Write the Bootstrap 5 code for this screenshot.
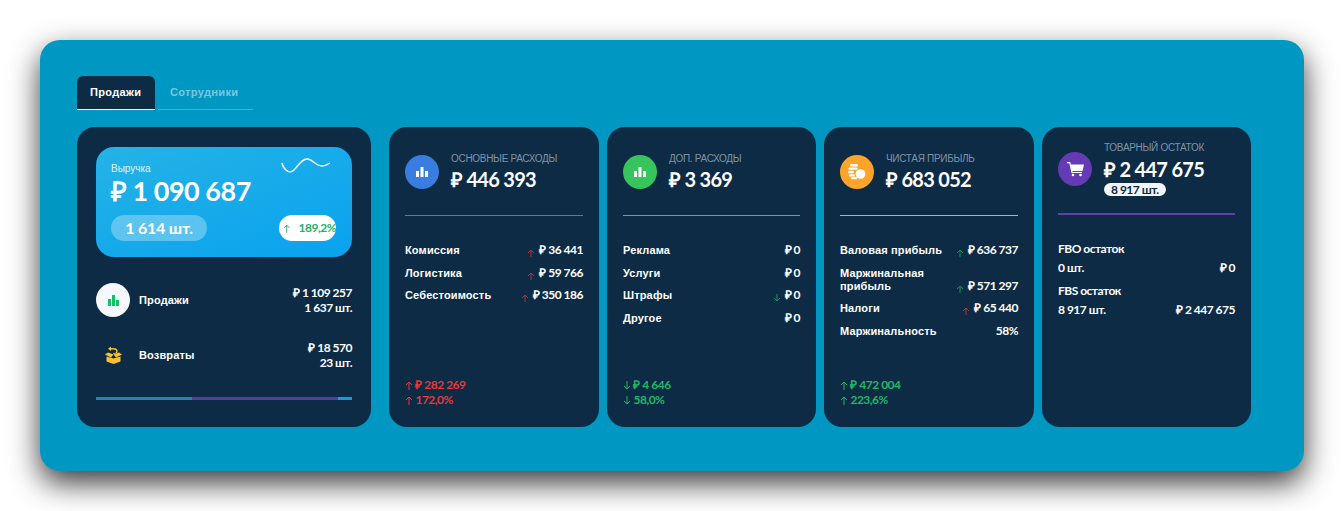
<!DOCTYPE html>
<html lang="ru">
<head>
  <meta charset="UTF-8" />
  <meta name="viewport" content="width=device-width, initial-scale=1.0" />
  <link href="https://cdn.jsdelivr.net/npm/bootstrap@5.3.3/dist/css/bootstrap.min.css" rel="stylesheet" />
  <title>Продажи</title>
  <style>
    html, body { height: 511px; overflow: hidden; }
    body { background: #fff; font-family: Lato, "Liberation Sans", sans-serif; color: #fff; padding: 40px; }
    .panel { width: 1264px; height: 431px; background: #0098c3; border-radius: 20px; box-shadow: 0 12px 30px rgba(0,0,0,.78); padding: 36px 53px 0 37px; }
    .tabs { height: 34px; margin-bottom: 17px; }
    .tab-item { font-family: "Liberation Sans", sans-serif; font-size: 11px; font-weight: 700; letter-spacing: .35px; line-height: 32px; height: 34px; border-bottom: 1px solid rgba(255,255,255,.25); color: #7cc6df; }
    .tab-item.on { width: 78px; padding-left: 13px; background: #0d2b45; color: #fff; border-radius: 6px 6px 0 0; border-bottom-color: #fff; margin-right: 3px; }
    .tab-item.off { width: 95px; padding-left: 12px; }
    .tile { background: #0d2b45; border-radius: 18px; height: 300px; font-size: 12px; letter-spacing: -.5px; font-weight: 700; }
    .tile-main { width: 294px; padding: 20px 19px; margin-right: 18px; }
    .tile-sub { width: 210px; padding: 28px 16px 0; margin-right: 8px; }
    .tile-narrow { width: 209px; }
    .tile-last { margin-right: 0; }
    .label-font { font-family: "Liberation Sans", sans-serif; font-size: 11px; letter-spacing: .15px; }
    .line .label-font { padding-top: 1px; }
    .hero { height: 110px; border-radius: 18px; background: linear-gradient(160deg, #25b3e6, #09a2ee); padding: 15px 15px 0; position: relative; }
    .hero-cap { font-family: "Liberation Sans", sans-serif; font-size: 10px; font-weight: 400; letter-spacing: 0; line-height: 14px; opacity: .85; }
    .hero-val { font-size: 27px; line-height: 28px; letter-spacing: -.5px; margin-top: 1px; }
    .hero-foot { margin-top: 10px; }
    .pill-qty { width: 96px; height: 26px; line-height: 26px; border-radius: 13px; text-align: center; background: rgba(255,255,255,.3); font-size: 16px; letter-spacing: -.2px; }
    .pill-up { width: 57px; height: 26px; line-height: 26px; border-radius: 13px; background: #fff; color: #21b26b; white-space: nowrap; margin-right: 1px; padding-left: 4px; }
    .pill-arrow { margin-right: 8px; }
    .wave { position: absolute; right: 21px; top: 10px; }
    .flow-row { height: 34px; }
    .flow-first { margin-top: 26px; }
    .flow-next { margin-top: 21px; }
    .flow-ico { width: 34px; height: 34px; border-radius: 50%; margin-right: 9px; }
    .ico-light { background: #f5f8fc; }
    .flow-num { line-height: 15px; text-align: right; }
    .bar-track { height: 3px; margin-top: 25px; }
    .bar-a { width: 96px; background: #1f87b5; }
    .bar-b { width: 146px; background: #5c37ae; }
    .bar-c { width: 14px; background: #0d9fe6; }
    .head-block { height: 34px; }
    .head-ico { width: 34px; height: 34px; border-radius: 50%; margin-right: 12px; flex: none; }
    .head-cap { font-family: "Liberation Sans", sans-serif; font-size: 10px; font-weight: 400; line-height: 12px; color: #7f93a6; text-transform: uppercase; white-space: nowrap; margin-top: -2px; letter-spacing: -.3px; }
    .head-val { font-size: 20px; line-height: 24px; margin-top: 2px; white-space: nowrap; letter-spacing: -.7px; }
    .rule { height: 1px; margin-top: 26px; margin-bottom: 27px; }
    .c-blue { background: #3a7de0; }
    .c-green { background: #38c45c; }
    .c-orange { background: #ffa42b; }
    .c-purple { background: #643ab5; }
    .rows { height: 134px; }
    .line { min-height: 22.5px; line-height: 13px; }
    .line svg { vertical-align: -3px; }
    .line-tall { min-height: 35.5px; }
    .line-name { max-width: 110px; }
    .line-val { white-space: nowrap; }
    .line-low { padding-top: 13px; }
    .foot { line-height: 15px; }
    .foot svg { vertical-align: -1px; }
    .txt-red { color: #e23a3e; }
    .txt-green { color: #1fb866; }
    .qty-pill { display: inline-block; background: #f2f5fa; color: #0d2b45; border-radius: 7px; height: 13px; line-height: 13px; padding: 0 7px; margin-top: 2px; vertical-align: top; }
    .stock-head { height: auto; margin-top: -14px; }
    .stock-ico { margin-top: 11px; }
    .stock-cap { margin-top: 1px; }
    .stock-val { margin-top: 3px; }
    .stock-rule { height: 2px; margin-top: 14px; margin-bottom: 27px; }
    .stock-line { line-height: 13px; margin-bottom: 6px; }
    .stock-gap { margin-bottom: 10px; }
  </style>
</head>
<body>
  <div class="panel">
    <div class="tabs d-flex">
      <div class="tab-item on">Продажи</div>
      <div class="tab-item off">Сотрудники</div>
    </div>

    <div class="d-flex">
      <div class="tile tile-main">
        <div class="hero">
          <svg class="wave" width="50" height="18" viewBox="0 0 50 18" fill="none"><path d="M1 6C3 14 9 17 13 13C17 9 21 1 27 2C32 3 35 9 41 9C44 9 46 8 49 6" stroke="#fff" stroke-width="1.4"/></svg>
          <div class="hero-cap">Выручка</div>
          <div class="hero-val">₽ 1 090 687</div>
          <div class="hero-foot d-flex justify-content-between">
            <div class="pill-qty">1 614 шт.</div>
            <div class="pill-up d-flex align-items-center">
              <svg class="pill-arrow" width="8" height="9" viewBox="0 0 8 9" fill="none" stroke="#21b26b" stroke-width="1"><path d="M4 9V1M1 4l3-3 3 3"/></svg>189,2%
            </div>
          </div>
        </div>

        <div class="flow-row flow-first d-flex align-items-center justify-content-between">
          <div class="d-flex align-items-center">
            <div class="flow-ico ico-light d-flex align-items-center justify-content-center">
              <svg width="11" height="11" viewBox="0 0 11 11" fill="#12c15f"><rect x="0" y="4" width="3" height="7"/><rect x="4" y="0" width="3" height="11"/><rect x="8" y="5" width="3" height="6"/></svg>
            </div>
            <span class="label-font">Продажи</span>
          </div>
          <div class="flow-num">₽ 1 109 257<br>1 637 шт.</div>
        </div>

        <div class="flow-row flow-next d-flex align-items-center justify-content-between">
          <div class="d-flex align-items-center">
            <div class="flow-ico d-flex align-items-center justify-content-center">
              <svg width="17" height="18" viewBox="0 0 17 18"><path d="M1.5 10.5l7 2 7-2v5l-7 2.5-7-2.5z" fill="#fbc02d"/><path d="M0 8.5L3 6.5l5.5 2L6 11.5zM17 8.5L14 6.5l-5.5 2 2.5 3z" fill="#fbc02d"/><path d="M8 8V7.2c2.5 0 3.2-1 3.2-2S10.4 3.4 8.5 3.4H6V5L3 2.7 6 .5V2h2.5c3 0 4.2 1.5 4.2 3.2 0 1.8-1.500 2.800-4.700 2.800z" fill="#fbc02d"/></svg>
            </div>
            <span class="label-font">Возвраты</span>
          </div>
          <div class="flow-num">₽ 18 570<br>23 шт.</div>
        </div>

        <div class="bar-track d-flex">
          <div class="bar-a"></div><div class="bar-b"></div><div class="bar-c"></div>
        </div>
      </div>

      <div class="tile tile-sub">
        <div class="head-block d-flex">
          <div class="head-ico c-blue d-flex align-items-center justify-content-center">
            <svg width="12" height="10" viewBox="0 0 12 10" fill="#fff"><rect x="0" y="4" width="3" height="6"/><rect x="4.5" y="0" width="3" height="10"/><rect x="9" y="4" width="3" height="6"/></svg>
          </div>
          <div>
            <div class="head-cap">Основные расходы</div>
            <div class="head-val">₽ 446 393</div>
          </div>
        </div>
        <div class="rule c-blue"></div>
        <div class="rows">
          <div class="line d-flex justify-content-between"><span class="label-font">Комиссия</span><span class="line-val"><svg class="me-1" width="8" height="8" viewBox="0 0 8 8" fill="none" stroke="#b3313a"><path d="M4 8V1M1 4l3-3 3 3"/></svg>₽ 36 441</span></div>
          <div class="line d-flex justify-content-between"><span class="label-font">Логистика</span><span class="line-val"><svg class="me-1" width="8" height="8" viewBox="0 0 8 8" fill="none" stroke="#b3313a"><path d="M4 8V1M1 4l3-3 3 3"/></svg>₽ 59 766</span></div>
          <div class="line d-flex justify-content-between"><span class="label-font">Себестоимость</span><span class="line-val"><svg class="me-1" width="8" height="8" viewBox="0 0 8 8" fill="none" stroke="#b3313a"><path d="M4 8V1M1 4l3-3 3 3"/></svg>₽ 350 186</span></div>
        </div>
        <div class="foot txt-red">
          <div><svg width="8" height="9" viewBox="0 0 8 9" fill="none" stroke="#e23a3e"><path d="M4 9V1M1 4l3-3 3 3"/></svg> ₽ 282 269</div>
          <div><svg width="8" height="9" viewBox="0 0 8 9" fill="none" stroke="#e23a3e"><path d="M4 9V1M1 4l3-3 3 3"/></svg> 172,0%</div>
        </div>
      </div>

      <div class="tile tile-sub tile-narrow">
        <div class="head-block d-flex">
          <div class="head-ico c-green d-flex align-items-center justify-content-center">
            <svg width="12" height="10" viewBox="0 0 12 10" fill="#fff"><rect x="0" y="4" width="3" height="6"/><rect x="4.5" y="0" width="3" height="10"/><rect x="9" y="4" width="3" height="6"/></svg>
          </div>
          <div>
            <div class="head-cap">Доп. расходы</div>
            <div class="head-val">₽ 3 369</div>
          </div>
        </div>
        <div class="rule c-green"></div>
        <div class="rows">
          <div class="line d-flex justify-content-between"><span class="label-font">Реклама</span><span class="line-val">₽ 0</span></div>
          <div class="line d-flex justify-content-between"><span class="label-font">Услуги</span><span class="line-val">₽ 0</span></div>
          <div class="line d-flex justify-content-between"><span class="label-font">Штрафы</span><span class="line-val"><svg class="me-1" width="8" height="8" viewBox="0 0 8 8" fill="none" stroke="#16905a"><path d="M4 0v7M1 4l3 3 3-3"/></svg>₽ 0</span></div>
          <div class="line d-flex justify-content-between"><span class="label-font">Другое</span><span class="line-val">₽ 0</span></div>
        </div>
        <div class="foot txt-green">
          <div><svg width="8" height="9" viewBox="0 0 8 9" fill="none" stroke="#1fb866"><path d="M4 0v8M1 5l3 3 3-3"/></svg> ₽ 4 646</div>
          <div><svg width="8" height="9" viewBox="0 0 8 9" fill="none" stroke="#1fb866"><path d="M4 0v8M1 5l3 3 3-3"/></svg> 58,0%</div>
        </div>
      </div>

      <div class="tile tile-sub">
        <div class="head-block d-flex">
          <div class="head-ico c-orange d-flex align-items-center justify-content-center">
            <svg width="18" height="16" viewBox="0 0 18 16" fill="#fff"><rect x="2" y="0" width="8" height="2.4" rx="1"/><rect x="0.5" y="3.4" width="9" height="2.4" rx="1"/><rect x="0" y="6.8" width="6" height="2.4" rx="1"/><rect x="1" y="10.2" width="6" height="2.4" rx="1"/><rect x="3" y="13" width="6" height="2.2" rx="1"/><circle cx="12.5" cy="10" r="4.8"/></svg>
          </div>
          <div>
            <div class="head-cap">Чистая прибыль</div>
            <div class="head-val">₽ 683 052</div>
          </div>
        </div>
        <div class="rule c-orange"></div>
        <div class="rows">
          <div class="line d-flex justify-content-between"><span class="label-font">Валовая прибыль</span><span class="line-val"><svg class="me-1" width="8" height="8" viewBox="0 0 8 8" fill="none" stroke="#16905a"><path d="M4 8V1M1 4l3-3 3 3"/></svg>₽ 636 737</span></div>
          <div class="line line-tall d-flex justify-content-between"><span class="line-name label-font">Маржинальная прибыль</span><span class="line-val line-low"><svg class="me-1" width="8" height="8" viewBox="0 0 8 8" fill="none" stroke="#16905a"><path d="M4 8V1M1 4l3-3 3 3"/></svg>₽ 571 297</span></div>
          <div class="line d-flex justify-content-between"><span class="label-font">Налоги</span><span class="line-val"><svg class="me-1" width="8" height="8" viewBox="0 0 8 8" fill="none" stroke="#b3313a"><path d="M4 8V1M1 4l3-3 3 3"/></svg>₽ 65 440</span></div>
          <div class="line d-flex justify-content-between"><span class="label-font">Маржинальность</span><span class="line-val">58%</span></div>
        </div>
        <div class="foot txt-green">
          <div><svg width="8" height="9" viewBox="0 0 8 9" fill="none" stroke="#1fb866"><path d="M4 9V1M1 4l3-3 3 3"/></svg> ₽ 472 004</div>
          <div><svg width="8" height="9" viewBox="0 0 8 9" fill="none" stroke="#1fb866"><path d="M4 9V1M1 4l3-3 3 3"/></svg> 223,6%</div>
        </div>
      </div>

      <div class="tile tile-sub tile-narrow tile-last">
        <div class="head-block stock-head d-flex align-items-start">
          <div class="head-ico stock-ico c-purple d-flex align-items-center justify-content-center">
            <svg width="17" height="15" viewBox="0 0 17 15"><path d="M0 .7h2.8L5 10.5h10" fill="none" stroke="#fff" stroke-width="1.2"/><path d="M3.4 2.5H17l-1.5 6.5H4.8z" fill="#fff"/><circle cx="6" cy="13" r="1.3" fill="#fff"/><circle cx="13.5" cy="13" r="1.3" fill="#fff"/></svg>
          </div>
          <div>
            <div class="head-cap stock-cap">Товарный остаток</div>
            <div class="head-val stock-val">₽ 2 447 675</div>
            <div class="qty-pill">8 917 шт.</div>
          </div>
        </div>
        <div class="stock-rule c-purple"></div>
        <div class="stock-line">FBO остаток</div>
        <div class="stock-line stock-gap d-flex justify-content-between"><span>0 шт.</span><span>₽ 0</span></div>
        <div class="stock-line">FBS остаток</div>
        <div class="stock-line d-flex justify-content-between"><span>8 917 шт.</span><span>₽ 2 447 675</span></div>
      </div>
    </div>
  </div>
</body>
</html>
